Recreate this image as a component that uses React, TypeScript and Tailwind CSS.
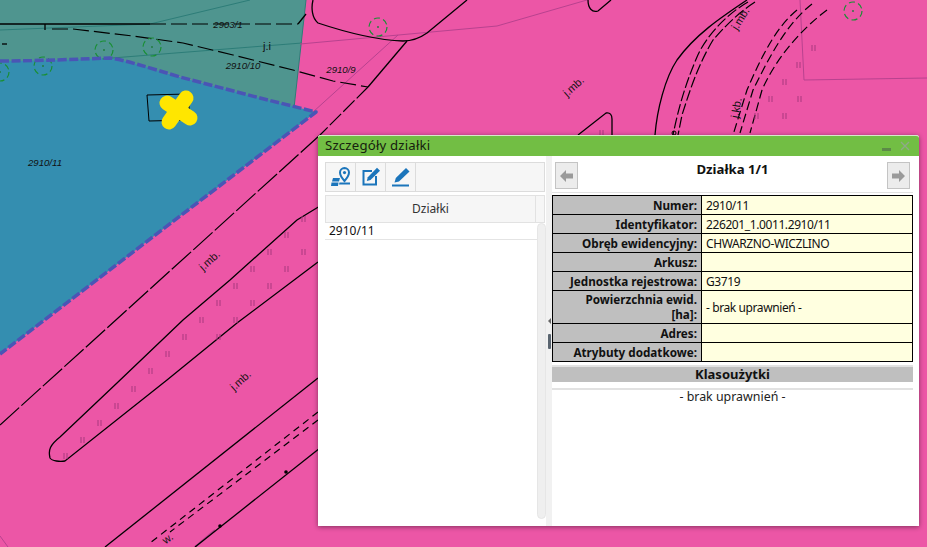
const marks: [number, number][] = [
  [66, 456], [83, 440], [100, 423], [117, 406], [134, 389], [151, 371], [168, 354], [185, 337],
  [202, 320], [219, 303], [236, 286], [253, 269], [270, 252], [287, 235], [304, 219],
  [219, 337], [236, 320], [253, 303], [270, 286], [287, 269], [304, 252],
  [602, 133], [814, 48], [799, 65], [785, 82], [771, 99], [800, 99], [757, 116], [785, 116],
]

const trees: [number, number][] = [
  [104, 50], [152, 47], [43, 66], [0, 72], [378, 27], [853, 11],
]

const labels: { t: string; x: number; y: number; r?: number; italic?: boolean }[] = [
  { t: '2903/1', x: 228, y: 28, italic: true },
  { t: '2910/10', x: 243, y: 69, italic: true },
  { t: '2910/11', x: 45, y: 166, italic: true },
  { t: '2910/9', x: 341, y: 73, italic: true },
  { t: 'j.i', x: 267, y: 50 },
  { t: 'j.mb.', x: 210, y: 264, r: -42 },
  { t: 'j.mb.', x: 241, y: 384, r: -42 },
  { t: 'j.mb.', x: 574, y: 90, r: -42 },
  { t: 'j.mb.', x: 741, y: 22, r: -58 },
  { t: 'j.kb.', x: 737, y: 111, r: -80 },
  { t: 'w.', x: 168, y: 542, r: -35 },
]

function MapView() {
  return (
    <svg className="block" width="927" height="547" viewBox="0 0 927 547">
      <rect width="927" height="547" fill="#ec56a6" />
      <path d="M0 0H306L294 108L115 59L0 62Z" fill="#4f958f" />
      <path d="M0 61C40 61 80 59 110 58C125 60 150 68 180 77L260 98L316 112L0 354Z" fill="#348eb0" />

      {/* parcel borders */}
      <g fill="none" stroke="#2d7d78" strokeWidth="1">
        <path d="M0 30L150 24L250 0" />
        <path d="M112 58L302 43" />
        <path d="M306 0L294 108" />
      </g>
      <g fill="none" stroke="#b8428f" strokeWidth="1">
        <path d="M300 44L497 26L587 0" />
        <path d="M398 35L313 112" />
        <path d="M800 0L804 80L927 78" />
        <path d="M0 536L8 547" />
        <path d="M195 547L215 530" strokeWidth="2" />
      </g>

      {/* solid lines */}
      <g fill="none" stroke="#000" strokeWidth="1.3">
        <path d="M0 24H150" />
        <path d="M45 24V30" />
        <path d="M2 44H7" />
        <path d="M298 24L306 14" />
        <path d="M313 0C311 8 312 18 318 23C345 32 375 40 403 41C412 41 420 38 427 33L467 0" />
        <path d="M407 41L368 87" />
        <path d="M588 0C588 8 592 13 598 11L611 0" />
        <path d="M578 135L606 113C610 112 612 115 612 119V135" />
        <path d="M747 0C720 18 695 35 677 60C665 78 657 110 655 135" />
        <path d="M320 206L297 220L230 280L183 320L117 383L60 437C50 445 48 450 50 458C52 461 60 462 65 461L167 380L237 323L318 262" />
        <path d="M318 378L105 547" />
        <path d="M320 448L195 547" />
      </g>

      {/* dashed lines */}
      <g fill="none" stroke="#000" strokeWidth="1.2">
        <path d="M150 24H298" strokeDasharray="16 5" />
        <path d="M52 29L73 29L133 36L183 43L233 55L293 70L333 81L368 87" strokeDasharray="16 5" />
        <path d="M368 87L320 135" strokeDasharray="16 3" />
        <path d="M320 135L0 425" strokeDasharray="26 3" />
        <path d="M748 2C725 15 705 38 697 57C685 85 678 110 673 135" strokeDasharray="11 3" />
        <path d="M755 2C735 15 722 30 713 40C698 65 690 90 682 115L678 135" strokeDasharray="11 3" />
        <path d="M797 10C775 28 760 60 747 90L733 135" strokeDasharray="9 4" />
        <path d="M812 4C785 25 768 60 753 90L740 133" strokeDasharray="9 4" />
        <path d="M827 10C800 30 775 60 762 90L750 133" strokeDasharray="9 4" />
        <path d="M318 412L150 543" strokeDasharray="7 5" />
        <path d="M318 420L170 532" strokeDasharray="7 5" />
      </g>
      <circle cx="286" cy="472" r="1.8" fill="#000" />
      <circle cx="220" cy="526" r="1.8" fill="#000" />
      <circle cx="674" cy="133" r="2" fill="none" stroke="#000" />

      {marks.map(([x, y]) => (
        <path key={`${x}-${y}`} d={`M${x - 2} ${y - 3}v6M${x + 1} ${y - 3}v6`} stroke="#a8397f" strokeWidth="1" />
      ))}

      {trees.map(([x, y]) => (
        <g key={`${x}-${y}`}>
          <circle cx={x} cy={y} r="9" fill="none" stroke="#1a8f35" strokeWidth="1.2" strokeDasharray="6 3.5" />
          <circle cx={x} cy={y} r="0.9" fill="#1f7a3a" />
        </g>
      ))}

      {/* selected parcel outline */}
      <path
        d="M0 61C40 61 80 59 110 58C125 60 150 68 180 77L260 98L316 112L0 354"
        fill="none"
        stroke="#4a55b5"
        strokeWidth="3.5"
        strokeDasharray="9 2.5"
        strokeLinejoin="round"
      />

      <path d="M147 95L188 94L190 120L149 121Z" fill="none" stroke="#000" strokeWidth="1" />
      <g stroke="#ffe600" strokeWidth="15" strokeLinecap="round">
        <path d="M186 98L169 122" />
        <path d="M167 103L190 118" />
      </g>

      {labels.map((l) => (
        <text
          key={`${l.t}-${l.x}`}
          x={l.x}
          y={l.y}
          fontSize={l.italic ? '9.6' : '11'}
          fontStyle={l.italic ? 'italic' : 'normal'}
          fontFamily="Liberation Sans, sans-serif"
          textAnchor="middle"
          fill="#111"
          transform={l.r ? `rotate(${l.r} ${l.x} ${l.y - 3})` : undefined}
        >
          {l.t}
        </text>
      ))}
    </svg>
  )
}

const rows: { label: React.ReactNode; value: string; tall?: boolean }[] = [
  { label: 'Numer:', value: '2910/11' },
  { label: 'Identyfikator:', value: '226201_1.0011.2910/11' },
  { label: 'Obręb ewidencyjny:', value: 'CHWARZNO-WICZLINO' },
  { label: 'Arkusz:', value: '' },
  { label: 'Jednostka rejestrowa:', value: 'G3719' },
  { label: <>Powierzchnia ewid.<br />[ha]:</>, value: '- brak uprawnień -', tall: true },
  { label: 'Adres:', value: '' },
  { label: 'Atrybuty dodatkowe:', value: '' },
]

function ParcelIcon() {
  return (
    <svg width="20" height="20" viewBox="0 0 20 20">
      <path d="M2 11H9L8 14.5H1Z" fill="#1b75bb" />
      <path d="M.5 15.5H7.5L7 19H0Z" fill="#1b75bb" />
      <path d="M8.5 15.5H19V17.5H8Z" fill="#1b75bb" />
      <path d="M13.5 1A4.6 4.6 0 0 0 9 5.6C9 9 13.5 14 13.5 14S18 9 18 5.6A4.6 4.6 0 0 0 13.5 1Z" fill="none" stroke="#1b75bb" strokeWidth="2" />
      <circle cx="13.5" cy="5.6" r="1.6" fill="#1b75bb" />
    </svg>
  )
}

function EditBoxIcon() {
  return (
    <svg width="20" height="20" viewBox="0 0 20 20">
      <path d="M11 4H2.5V17.5H15V9" fill="none" stroke="#1b75bb" strokeWidth="2" />
      <path d="M16 .8L19 3.8L9.5 13L5.8 14L6.8 10.2Z" fill="#1b75bb" />
    </svg>
  )
}

function PencilIcon() {
  return (
    <svg width="20" height="20" viewBox="0 0 20 20">
      <path d="M15 1L18.5 4.5L8 14.5L3.5 15.5L4.8 11Z" fill="#1b75bb" />
      <path d="M1 17.5H18V19.5H1Z" fill="#1b75bb" />
    </svg>
  )
}

function NavArrow({ dir }: { dir: 'left' | 'right' }) {
  return (
    <div className="flex h-[27px] w-[23px] items-center justify-center border border-[#c4c4c4] bg-[#ececec]">
      <svg width="13" height="12" viewBox="0 0 13 12">
        <path d={dir === 'left' ? 'M0 6L6 0V3.5H13V8.5H6V12Z' : 'M13 6L7 0V3.5H0V8.5H7V12Z'} fill="#9a9a9a" />
      </svg>
    </div>
  )
}

export default function App() {
  return (
    <div className="relative h-[547px] w-[927px] overflow-hidden font-['Noto_Sans',sans-serif]">
      <MapView />

      {/* Window */}
      <div className="absolute left-[318px] top-[135px] flex h-[391px] w-[601px] flex-col rounded-t-[3px] bg-white shadow-[0_1px_5px_rgba(0,0,0,0.45)]">
        <div className="flex h-[21px] shrink-0 items-center justify-between rounded-t-[3px] border-t border-[#d8e8cc] bg-[#72be44] pl-[7px] pr-[9px]">
          <span className="text-[13.2px] tracking-[0.2px] text-[#16210f]">Szczegóły działki</span>
          <div className="flex items-center gap-[9px]">
            <span className="mt-[6px] h-[3px] w-[9px] bg-[#5c8a48]" />
            <svg width="10" height="10" viewBox="0 0 10 10">
              <path d="M1 1L9 9M9 1L1 9" stroke="#8fa98a" strokeWidth="1.3" />
            </svg>
          </div>
        </div>

        <div className="flex min-h-0 flex-1 pl-[7px]">
          {/* Left pane */}
          <div className="flex w-[221px] shrink-0 flex-col pt-[6px]">
            <div className="flex h-[30px] w-[220px] shrink-0 border border-[#dcdcdc] bg-[#f6f6f6]">
              {[<ParcelIcon key="p" />, <EditBoxIcon key="e" />, <PencilIcon key="c" />].map((icon, i) => (
                <div key={i} className="flex w-[30px] items-center justify-center border-r border-[#dcdcdc]">
                  {icon}
                </div>
              ))}
            </div>
            <div className="mt-[3px] flex h-[28px] w-[220px] shrink-0 border border-[#e2e2e2] bg-[#f6f6f6] text-[12px] text-[#333]">
              <div className="flex flex-1 items-center justify-center border-r border-[#e2e2e2]">Działki</div>
              <div className="w-[8px]" />
            </div>
            <div className="flex min-h-0 flex-1">
              <div className="flex-1">
                <div className="h-[17px] border-b border-[#e4e4e4] pl-[4px] text-[12px] leading-[16px] text-[#111]">2910/11</div>
              </div>
              <div className="mb-[7px] w-[9px] rounded-[5px] border border-[#e6e6e6] bg-[#efefef]" />
            </div>
          </div>

          {/* Splitter */}
          <div className="flex w-[6px] shrink-0 flex-col items-center bg-[#f1f1f1] pt-[162px]">
            <span className="h-0 w-0 border-y-[3px] border-r-[3px] border-y-transparent border-r-[#666]" />
            <span className="mt-[10px] h-[15px] w-[3px] rounded-[1px] bg-[#5a6570]" />
          </div>

          {/* Right pane */}
          <div className="flex w-[361px] shrink-0 flex-col">
            <div className="flex h-[36px] shrink-0 items-start justify-between pl-[3px] pr-[3px] pt-[6px]">
              <NavArrow dir="left" />
              <span className="text-[13.2px] font-bold leading-[14px] text-[#111]">Działka 1/1</span>
              <NavArrow dir="right" />
            </div>
            <div className="h-[3px] shrink-0 border-t border-[#e2e2e2]" />
            <table className="w-[361px] shrink-0 table-fixed border-collapse text-[12px] leading-[15px] tracking-[-0.4px] text-[#111]">
              <tbody>
                {rows.map((r, i) => (
                  <tr key={i} className={r.tall ? 'h-[33px]' : 'h-[19px]'}>
                    <td className="w-[149px] border border-black bg-[#bfbfbf] px-[4px] py-0 text-right text-[11.7px] font-bold tracking-normal">{r.label}</td>
                    <td className="border border-black bg-[#ffffe0] px-[4px] py-0">{r.value}</td>
                  </tr>
                ))}
              </tbody>
            </table>
            <div className="mt-[3px] h-[2px] shrink-0 bg-[#e2e2e2]" />
            <div className="h-[15px] shrink-0 bg-[#bfbfbf] text-center text-[13px] font-bold leading-[15px] text-[#111]">Klasoużytki</div>
            <div className="mt-[6px] h-[2px] shrink-0 bg-[#e2e2e2]" />
            <div className="text-center text-[12.4px] leading-[14px] text-[#222]">- brak uprawnień -</div>
          </div>
        </div>
      </div>
    </div>
  )
}
